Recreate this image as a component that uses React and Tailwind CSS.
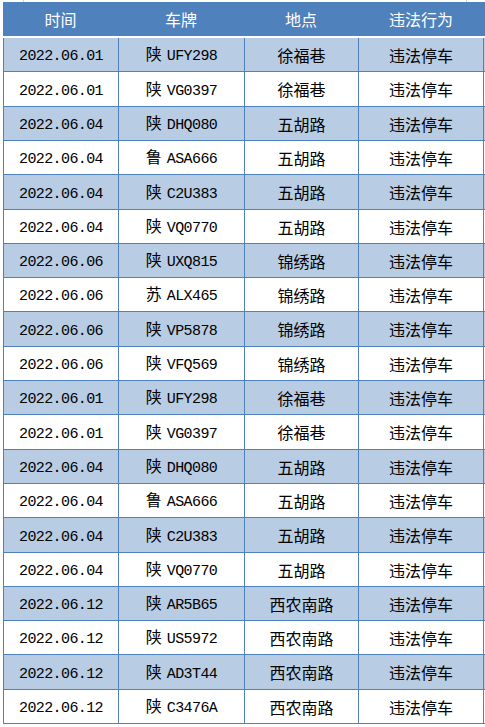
import React from 'react';

const cjk = '"Noto Sans CJK SC", sans-serif';

const base = [
  ['2022.06.01', '陕', 'UFY298', '徐福巷'],
  ['2022.06.01', '陕', 'VG0397', '徐福巷'],
  ['2022.06.04', '陕', 'DHQ080', '五胡路'],
  ['2022.06.04', '鲁', 'ASA666', '五胡路'],
  ['2022.06.04', '陕', 'C2U383', '五胡路'],
  ['2022.06.04', '陕', 'VQ0770', '五胡路'],
];

const rows = [
  ...base,
  ['2022.06.06', '陕', 'UXQ815', '锦绣路'],
  ['2022.06.06', '苏', 'ALX465', '锦绣路'],
  ['2022.06.06', '陕', 'VP5878', '锦绣路'],
  ['2022.06.06', '陕', 'VFQ569', '锦绣路'],
  ...base,
  ['2022.06.12', '陕', 'AR5B65', '西农南路'],
  ['2022.06.12', '陕', 'US5972', '西农南路'],
  ['2022.06.12', '陕', 'AD3T44', '西农南路'],
  ['2022.06.12', '陕', 'C3476A', '西农南路'],
];

// row boundaries fall on 38 + i * 34.3, so heights alternate 34 / 35
const heights = rows.map((_, i) => Math.round(38 + (i + 1) * 34.3) - Math.round(38 + i * 34.3));

const cols = 'grid grid-cols-[115px_126px_114px_126px]';
const cell = 'flex items-center justify-center border-l border-[#4f81bd]';
const mono = "font-['Liberation_Mono'] text-[15px] tracking-[-0.6px]";

function Row({ r, i }) {
  const [date, prov, plate, place] = r;
  const bg = i % 2 === 0 ? 'bg-[#b8cce4]' : 'bg-white';
  return (
    <div className={`${cols} ${bg} border-b border-[#4f81bd] text-black`} style={{ height: heights[i] }}>
      <div className={cell}>
        <span className={`${mono} pt-[6px]`}>{date}</span>
      </div>
      <div className={cell}>
        <span className="leading-[20px] pt-[1px] whitespace-nowrap">
          <span className="text-[16px]" style={{ fontFamily: cjk }}>{prov}</span>
          <span className={`${mono} ml-[5px]`}>{plate}</span>
        </span>
      </div>
      <div className={`${cell} text-[16px]`} style={{ fontFamily: cjk }}>{place}</div>
      <div className={`${cell} border-r text-[16px]`} style={{ fontFamily: cjk }}>违法停车</div>
    </div>
  );
}

export default function App() {
  return (
    <div className="w-[485px] h-[727px] bg-white overflow-hidden">
      <div className="h-[2px] flex">
        <div className="ml-[23px] w-px bg-[#d4d4d4]" />
        <div className="ml-[442px] w-px bg-[#d4d4d4]" />
      </div>
      <div
        className={`${cols} ml-[3px] h-[34px] bg-[#4f81bd] text-white text-[16px]`}
        style={{ fontFamily: cjk }}
      >
        <div className="flex items-center justify-center">时间</div>
        <div className="flex items-center justify-center">车牌</div>
        <div className="flex items-center justify-center">地点</div>
        <div className="flex items-center justify-center">违法行为</div>
      </div>
      <div className="h-[2px]" />
      <div className="ml-[3px]">
        {rows.map((r, i) => (
          <Row key={i} r={r} i={i} />
        ))}
      </div>
    </div>
  );
}
